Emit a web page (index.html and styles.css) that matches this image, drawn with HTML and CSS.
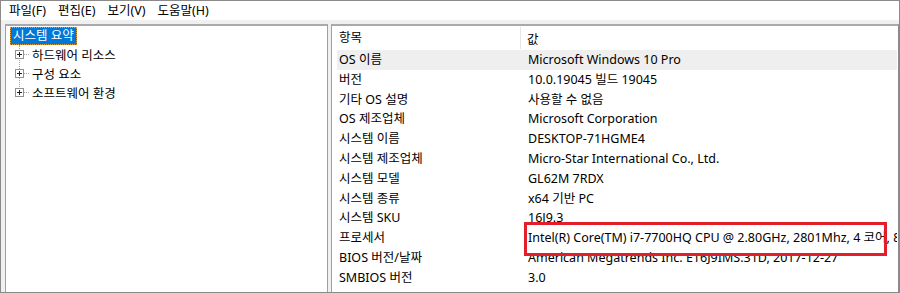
FILE: index.html
```html
<!DOCTYPE html>
<html lang="ko">
<head>
    <meta charset="UTF-8">
    <title>시스템 정보</title>
    <link rel="stylesheet" href="styles.css">
</head>
<body>

<div class="window">
    <div class="menubar">
        <span class="menu-item">파일(F)</span>
        <span class="menu-item">편집(E)</span>
        <span class="menu-item">보기(V)</span>
        <span class="menu-item">도움말(H)</span>
    </div>

    <div class="main">
        <!-- Category tree -->
        <div class="pane tree-pane">
            <div class="tree-root">
                <span class="selected">시스템 요약</span>
            </div>
            <ul class="tree-children">
                <li class="tree-node"><span class="expander"></span><span class="branch"></span>하드웨어 리소스</li>
                <li class="tree-node"><span class="expander"></span><span class="branch"></span>구성 요소</li>
                <li class="tree-node"><span class="expander"></span><span class="branch"></span>소프트웨어 환경</li>
            </ul>
        </div>

        <!-- Item / value list -->
        <div class="pane list-pane">
            <div class="list-header">
                <div class="cell name">항목</div>
                <div class="cell value">값</div>
            </div>
            <div class="row hover">
                <div class="cell name">OS 이름</div>
                <div class="cell value">Microsoft Windows 10 Pro</div>
            </div>
            <div class="row">
                <div class="cell name">버전</div>
                <div class="cell value">10.0.19045 빌드 19045</div>
            </div>
            <div class="row">
                <div class="cell name">기타 OS 설명</div>
                <div class="cell value">사용할 수 없음</div>
            </div>
            <div class="row">
                <div class="cell name">OS 제조업체</div>
                <div class="cell value">Microsoft Corporation</div>
            </div>
            <div class="row">
                <div class="cell name">시스템 이름</div>
                <div class="cell value">DESKTOP-71HGME4</div>
            </div>
            <div class="row">
                <div class="cell name">시스템 제조업체</div>
                <div class="cell value">Micro-Star International Co., Ltd.</div>
            </div>
            <div class="row">
                <div class="cell name">시스템 모델</div>
                <div class="cell value">GL62M 7RDX</div>
            </div>
            <div class="row">
                <div class="cell name">시스템 종류</div>
                <div class="cell value">x64 기반 PC</div>
            </div>
            <div class="row">
                <div class="cell name">시스템 SKU</div>
                <div class="cell value">16J9.3</div>
            </div>
            <div class="row">
                <div class="cell name">프로세서</div>
                <div class="cell value">Intel(R) Core(TM) i7-7700HQ CPU @ 2.80GHz, 2801Mhz, 4 코어, 8 논리 프로세서</div>
            </div>
            <div class="row">
                <div class="cell name">BIOS 버전/날짜</div>
                <div class="cell value">American Megatrends Inc. E16J9IMS.31D, 2017-12-27</div>
            </div>
            <div class="row">
                <div class="cell name">SMBIOS 버전</div>
                <div class="cell value">3.0</div>
            </div>

            <!-- annotation box around the processor row -->
            <div class="highlight-box"></div>
        </div>
    </div>
</div>

</body>
</html>
```

FILE: styles.css
```css
/* Reset */
* {
    margin: 0;
    padding: 0;
    box-sizing: border-box;
}

body {
    font-family: 'Noto Sans', 'Noto Sans CJK KR', sans-serif;
    font-size: 12.5px;
    color: #000;
    background: #fff;
}

/* Window frame */
.window {
    width: 900px;
    height: 293px;
    border: 1px solid #8a8a8a;
    background-color: #f0f0f0;
    display: flex;
    flex-direction: column;
    overflow: hidden;
}

/* Menu bar */
.menubar {
    height: 19px;
    background-color: #fff;
    display: flex;
    align-items: center;
    padding-left: 8px;
    gap: 12px;
    flex-shrink: 0;
}

.menu-item {
    line-height: 19px;
}

/* Panes */
.main {
    flex: 1;
    display: flex;
    gap: 3px;
    padding: 4px 0 0 4px;
    min-height: 0;
}

.pane {
    background-color: #fff;
    border-top: 2px solid #a9a9a9;
    border-left: 1px solid #a0a0a0;
    overflow: hidden;
}

/* Tree */
.tree-pane {
    width: 323px;
    border-right: 1px solid #a0a0a0;
    padding: 1px 0 0 4px;
    position: relative;
}

.tree-root {
    height: 18px;
}

.selected {
    display: inline-block;
    height: 18px;
    line-height: 16px;
    padding: 0 2px;
    background-color: #0078d7;
    color: #fff;
    border: 1px dotted #e0a040;
}

.tree-children {
    list-style: none;
}

.tree-children::before {
    content: '';
    position: absolute;
    left: 13px;
    top: 19px;
    height: 48px;
    border-left: 1px dotted #a0a0a0;
}

.tree-node {
    height: 19px;
    display: flex;
    align-items: center;
}

.expander {
    width: 9px;
    height: 9px;
    margin-left: 5px;
    border: 1px solid #919191;
    background-color: #fff;
    position: relative;
    z-index: 1;
}

.expander::before {
    content: '';
    position: absolute;
    left: 1px;
    top: 3px;
    width: 5px;
    height: 1px;
    background-color: #222;
}

.expander::after {
    content: '';
    position: absolute;
    left: 3px;
    top: 1px;
    width: 1px;
    height: 5px;
    background-color: #222;
}

.branch {
    width: 5px;
    margin-right: 3px;
    border-top: 1px dotted #a0a0a0;
}

/* List */
.list-pane {
    flex: 1;
    border-right: 1px solid #8a8a8a;
    padding-left: 5px;
    padding-right: 1px;
    position: relative;
}

.list-header,
.row {
    display: grid;
    grid-template-columns: 184px 1fr;
}

.list-header {
    height: 24px;
    align-items: center;
}

.list-header .name {
    border-right: 1px solid #e5e5e5;
    height: 22px;
    line-height: 22px;
}

.row {
    height: 19.8px;
    line-height: 19.8px;
}

.row.hover {
    background-color: #efefef;
}

.cell {
    white-space: nowrap;
    overflow: hidden;
}

.cell.name {
    padding-left: 2px;
}

.cell.value {
    padding-left: 7px;
}

.list-header .value {
    padding-left: 6px;
}

/* Red annotation */
.highlight-box {
    position: absolute;
    left: 192px;
    top: 196px;
    width: 363px;
    height: 34px;
    border: 3px solid #e31e2a;
}
```
